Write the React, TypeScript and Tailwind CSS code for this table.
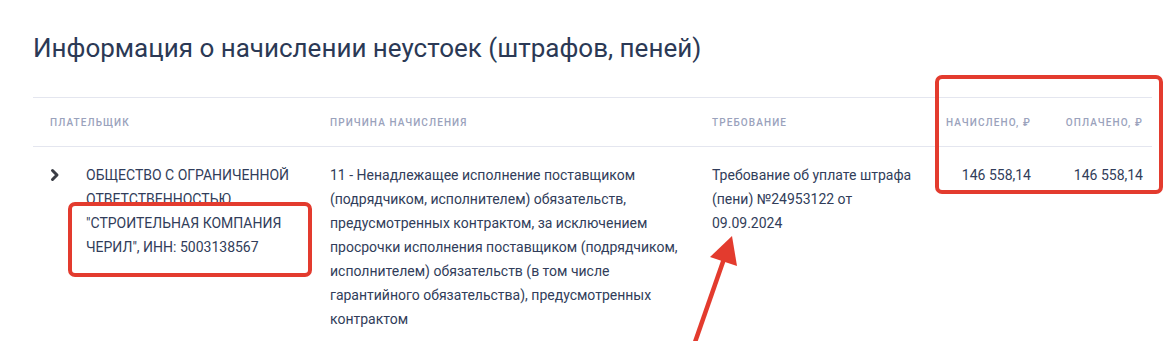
const rows = [
  {
    payer: 'ОБЩЕСТВО С ОГРАНИЧЕННОЙ ОТВЕТСТВЕННОСТЬЮ "СТРОИТЕЛЬНАЯ КОМПАНИЯ ЧЕРИЛ", ИНН: 5003138567',
    reason:
      '11 - Ненадлежащее исполнение поставщиком (подрядчиком, исполнителем) обязательств, предусмотренных контрактом, за исключением просрочки исполнения поставщиком (подрядчиком, исполнителем) обязательств (в том числе гарантийного обязательства), предусмотренных контрактом',
    demand: 'Требование об уплате штрафа (пени) №24953122 от 09.09.2024',
    charged: '146 558,14',
    paid: '146 558,14',
  },
]

const cols = 'grid grid-cols-[280px_382px_240px_105px_112px]'

function Chevron() {
  return (
    <svg width="10" height="14" viewBox="0 0 10 14" className="mt-[5px] shrink-0">
      <path d="M2.5 2.5 L7 7 L2.5 11.5" fill="none" stroke="#3a3d45" strokeWidth="3" strokeLinecap="round" strokeLinejoin="round" />
    </svg>
  )
}

export default function App() {
  return (
    <div className="relative h-[341px] w-[1173px] overflow-hidden bg-white px-[33px] pt-[33px] font-['Roboto',sans-serif]">
      <h1 className="text-[26px] leading-[31px] text-[#2b3955]">
        Информация о начислении неустоек (штрафов, пеней)
      </h1>

      <div className="mt-[33px] w-[1119px]">
        <div className={`${cols} h-[50px] items-center border-y border-[#e4e6ef] text-[10px] font-medium uppercase tracking-[1.1px] text-[#9aa2bc]`}>
          <div className="pl-[17px]">Плательщик</div>
          <div className="pl-[17px]">Причина начисления</div>
          <div className="pl-[17px]">Требование</div>
          <div className="pr-[9px] text-right">Начислено, ₽</div>
          <div className="pr-[9px] text-right">Оплачено, ₽</div>
        </div>

        {rows.map((row) => (
          <div key={row.demand} className={`${cols} pt-4 text-[14px] leading-6 text-[#313d5a]`}>
            <div className="flex gap-[26px] pl-[17px] pr-[12px]">
              <Chevron />
              <p>{row.payer}</p>
            </div>
            <p className="pl-[17px] pr-[12px]">{row.reason}</p>
            <p className="pl-[17px] pr-[16px]">{row.demand}</p>
            <p className="pr-[9px] text-right">{row.charged}</p>
            <p className="pr-[9px] text-right">{row.paid}</p>
          </div>
        ))}
      </div>

      {/* annotations */}
      <div className="absolute left-[68px] top-[202px] h-[75px] w-[244px] rounded-[7px] border-4 border-[#e33b2e]" />
      <div className="absolute left-[935px] top-[75px] h-[119px] w-[228px] rounded-[7px] border-4 border-[#e33b2e]" />
      <svg className="absolute left-0 top-0" width="1173" height="341">
        <line x1="694" y1="345" x2="725" y2="256" stroke="#e33b2e" strokeWidth="4.5" />
        <polygon points="732,236 710,257 737,266" fill="#e33b2e" />
      </svg>
    </div>
  )
}
